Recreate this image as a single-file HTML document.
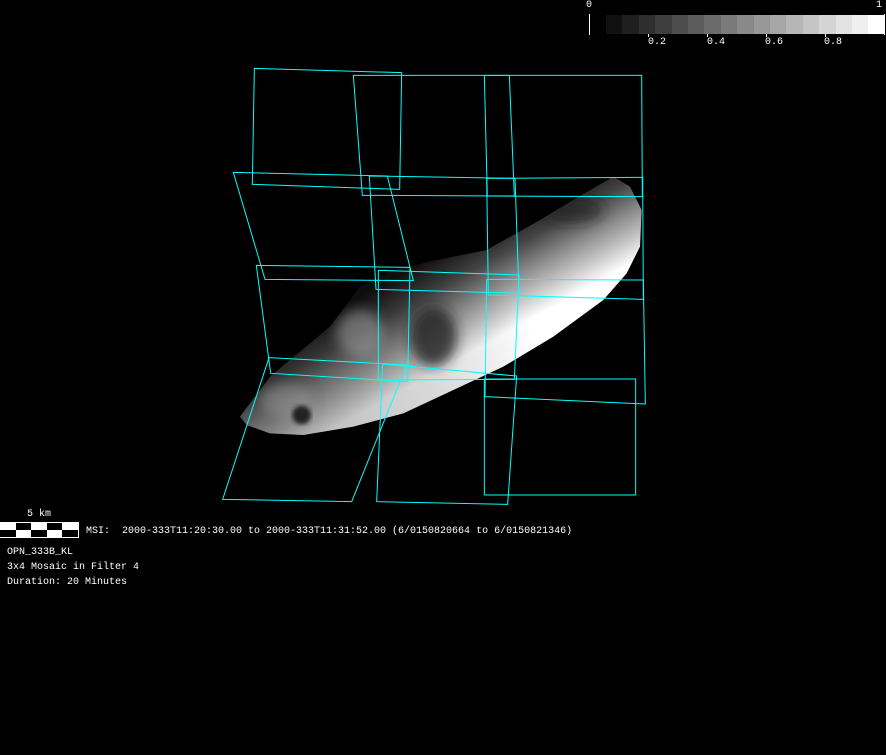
<!DOCTYPE html>
<html><head><meta charset="utf-8"><style>
html,body{margin:0;padding:0;background:#000;width:886px;height:755px;overflow:hidden}
.t{position:absolute;font-family:"Liberation Mono",monospace;font-size:10px;color:#fff;white-space:pre;line-height:12px}
</style></head><body>
<svg width="886" height="755" style="position:absolute;left:0;top:0">
<defs>
<linearGradient id="ag" gradientUnits="userSpaceOnUse" x1="690" y1="560" x2="840" y2="830">
<stop offset="0" stop-color="#111"/><stop offset="0.3" stop-color="#444"/><stop offset="0.55" stop-color="#888"/><stop offset="0.8" stop-color="#c8c8c8"/><stop offset="1" stop-color="#fff"/>
</linearGradient>
<linearGradient id="ag2" gradientUnits="userSpaceOnUse" x1="60" y1="1070" x2="1250" y2="400">
<stop offset="0" stop-color="#000" stop-opacity="0.3"/><stop offset="0.4" stop-color="#000" stop-opacity="0.15"/><stop offset="0.65" stop-color="#000" stop-opacity="0"/>
</linearGradient>
<filter id="bl"><feGaussianBlur stdDeviation="18"/></filter>
<filter id="bl2"><feGaussianBlur stdDeviation="6"/></filter>
<clipPath id="cp"><polygon points="60,1070 150,950 330,800 420,680 520,630 650,600 800,570 960,480 1060,420 1180,350 1230,380 1265,450 1260,560 1220,640 1150,720 1000,830 850,920 700,990 550,1060 400,1100 250,1125 150,1120 80,1095"/></clipPath>
</defs>
<g transform="translate(220,60) scale(0.33333)">
<g clip-path="url(#cp)">
<rect x="0" y="300" width="1300" height="900" fill="url(#ag)"/>
<rect x="0" y="300" width="1300" height="900" fill="url(#ag2)"/>
<g filter="url(#bl)">
<ellipse cx="640" cy="830" rx="70" ry="90" fill="#222" opacity="0.8"/>
<ellipse cx="420" cy="820" rx="70" ry="70" fill="#aaa" opacity="0.5"/>
<ellipse cx="200" cy="1020" rx="80" ry="50" fill="#999" opacity="0.5"/>
<ellipse cx="1060" cy="450" rx="90" ry="40" fill="#222" opacity="0.6"/>
</g>
<ellipse cx="245" cy="1065" rx="28" ry="28" fill="#222" filter="url(#bl2)"/>
</g>
<g fill="none" stroke="#0ff" stroke-width="3">
<polygon points="103,25 545,38 539,388 97,373"/>
<polygon points="400,46 868,46 883,408 427,406"/>
<polygon points="793,46 1265,46 1267,410 802,408"/>
<polygon points="40,337 502,348 580,662 135,658"/>
<polygon points="448,348 885,355 897,700 468,688"/>
<polygon points="800,355 1268,352 1270,718 805,705"/>
<polygon points="109,616 570,622 563,965 152,940"/>
<polygon points="475,631 897,645 883,958 475,960"/>
<polygon points="800,658 1270,660 1276,1032 795,1010"/>
<polygon points="147,893 560,915 395,1325 8,1318"/>
<polygon points="488,912 890,948 863,1333 470,1325"/>
<polygon points="793,957 1247,957 1247,1305 793,1305"/>
</g>
</g>
<g>
<rect x="606" y="15" width="17" height="19" fill="#111"/><rect x="622" y="15" width="17" height="19" fill="#1f1f1f"/><rect x="639" y="15" width="17" height="19" fill="#2e2e2e"/><rect x="655" y="15" width="17" height="19" fill="#3e3e3e"/><rect x="672" y="15" width="17" height="19" fill="#4d4d4d"/><rect x="688" y="15" width="17" height="19" fill="#5c5c5c"/><rect x="704" y="15" width="17" height="19" fill="#6b6b6b"/><rect x="721" y="15" width="17" height="19" fill="#7a7a7a"/><rect x="737" y="15" width="17" height="19" fill="#898989"/><rect x="754" y="15" width="17" height="19" fill="#989898"/><rect x="770" y="15" width="17" height="19" fill="#a7a7a7"/><rect x="786" y="15" width="17" height="19" fill="#b6b6b6"/><rect x="803" y="15" width="17" height="19" fill="#c5c5c5"/><rect x="819" y="15" width="17" height="19" fill="#d4d4d4"/><rect x="836" y="15" width="17" height="19" fill="#e3e3e3"/><rect x="852" y="15" width="17" height="19" fill="#efefef"/><rect x="868" y="15" width="17" height="19" fill="#fff"/>
<rect x="589" y="14" width="1" height="21" fill="#fff"/>
<rect x="884" y="14" width="1" height="21" fill="#fff"/>
<rect x="648" y="34" width="1" height="3" fill="#fff"/><rect x="707" y="34" width="1" height="3" fill="#fff"/><rect x="766" y="34" width="1" height="3" fill="#fff"/><rect x="825" y="34" width="1" height="3" fill="#fff"/>
</g>
<rect x="0" y="522" width="79" height="16" fill="#000"/>
<g fill="#fff">
<rect x="0" y="523" width="16" height="7"/><rect x="31" y="523" width="16" height="7"/><rect x="62" y="523" width="16" height="7"/>
<rect x="16" y="530" width="15" height="7"/><rect x="47" y="530" width="15" height="7"/>
<rect x="0" y="522" width="79" height="1"/><rect x="0" y="537" width="79" height="1"/><rect x="78" y="522" width="1" height="16"/>
</g>
</svg>
<div class="t" style="left:586px;top:0px">0</div>
<div class="t" style="left:876px;top:0px">1</div>
<div class="t" style="left:648px;top:37px">0.2</div>
<div class="t" style="left:707px;top:37px">0.4</div>
<div class="t" style="left:765px;top:37px">0.6</div>
<div class="t" style="left:824px;top:37px">0.8</div>
<div class="t" style="left:27px;top:509px">5 km</div>
<div class="t" style="left:86px;top:526px">MSI:  2000-333T11:20:30.00 to 2000-333T11:31:52.00 (6/0150820664 to 6/0150821346)</div>
<div class="t" style="left:7px;top:547px">OPN_333B_KL</div>
<div class="t" style="left:7px;top:562px">3x4 Mosaic in Filter 4</div>
<div class="t" style="left:7px;top:577px">Duration: 20 Minutes</div>
</body></html>
